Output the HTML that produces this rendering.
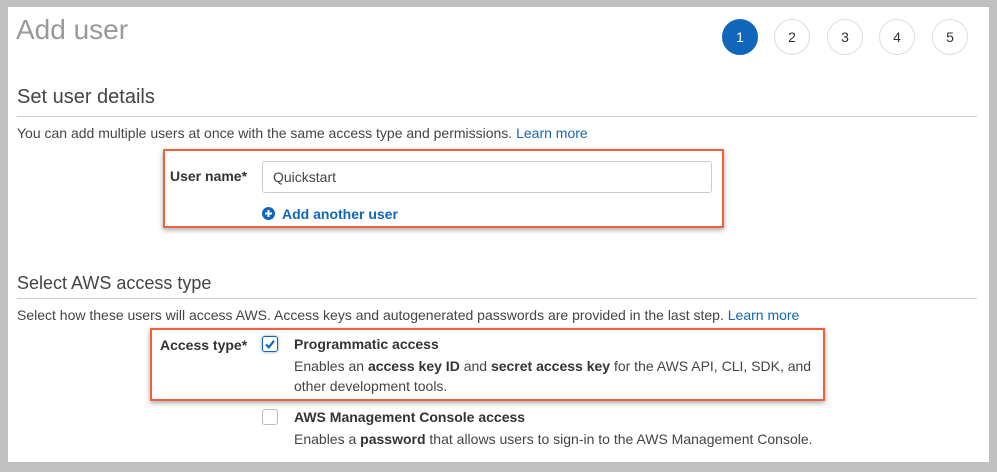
<!DOCTYPE html>
<html><head><style>
*{margin:0;padding:0;box-sizing:border-box}
body{width:997px;height:472px;background:#c0c0c0;font-family:"Liberation Sans",Arial,sans-serif;position:relative;overflow:hidden;color:#444}
#p{position:absolute;left:8px;top:7px;width:981px;height:455px;background:#fff}
.a{position:absolute;white-space:nowrap}
h1{position:absolute;left:16px;top:14px;font-size:28px;font-weight:normal;color:#999}
.h2{font-size:20px;color:#444}
.hr{position:absolute;height:1px;background:#ccc;left:17px;width:960px}
.t{font-size:14px;color:#444}
.lk{color:#1166bb}
.c{position:absolute;top:19px;width:36px;height:36px;border-radius:50%;border:1px solid #ddd;text-align:center;line-height:34px;font-size:14px;color:#333}
.box{position:absolute;border:2px solid #f0603a;box-shadow:0 2px 5px rgba(0,0,0,.35)}
.cb{position:absolute;width:16px;height:16px;border:1px solid #bbb;border-radius:3px;background:#fff}
b{color:#333}
</style></head><body>
<div id="p"></div>
<h1>Add user</h1>
<div class="c" style="left:722px;background:#1166bb;border-color:#1166bb;color:#fff">1</div>
<div class="c" style="left:774px">2</div>
<div class="c" style="left:827px">3</div>
<div class="c" style="left:879px">4</div>
<div class="c" style="left:932px">5</div>
<div class="a h2" style="left:17px;top:86px">Set user details</div>
<div class="hr" style="top:116px"></div>
<div class="a t" style="left:17px;top:125px">You can add multiple users at once with the same access type and permissions. <span class="lk">Learn more</span></div>
<div class="box" style="left:163px;top:149px;width:561px;height:79px"></div>
<div class="a t" style="left:170px;top:168px;font-weight:bold;color:#333">User name*</div>
<div class="a" style="left:262px;top:161px;width:450px;height:32px;border:1px solid #ccc;border-radius:3px;font-size:14px;line-height:30px;padding-left:10px;color:#444">Quickstart</div>
<svg class="a" style="left:262px;top:207px" width="13" height="13" viewBox="0 0 13 13"><circle cx="6.5" cy="6.5" r="6.5" fill="#1166bb"/><path d="M6.5 3v7M3 6.5h7" stroke="#fff" stroke-width="2"/></svg>
<div class="a t lk" style="left:282px;top:206px;font-weight:bold">Add another user</div>
<div class="a h2" style="left:17px;top:273px;font-size:18px">Select AWS access type</div>
<div class="hr" style="top:298px"></div>
<div class="a t" style="left:17px;top:307px">Select how these users will access AWS. Access keys and autogenerated passwords are provided in the last step. <span class="lk">Learn more</span></div>
<div class="box" style="left:150px;top:328px;width:675px;height:73px"></div>
<div class="a t" style="left:160px;top:337px;font-weight:bold;color:#333">Access type*</div>
<div class="cb" style="left:262px;top:336px;border-color:#1166bb;box-shadow:0 0 3px #7ab"><svg width="14" height="14" viewBox="0 0 14 14" style="position:absolute;left:0;top:0"><path d="M3 7.5l2.8 2.8L11 3.8" stroke="#1166bb" stroke-width="2.2" fill="none"/></svg></div>
<div class="a t" style="left:294px;top:336px;font-weight:bold;color:#333">Programmatic access</div>
<div class="a t" style="left:294px;top:358px">Enables an <b>access key ID</b> and <b>secret access key</b> for the AWS API, CLI, SDK, and</div>
<div class="a t" style="left:294px;top:378px">other development tools.</div>
<div class="cb" style="left:262px;top:409px"></div>
<div class="a t" style="left:294px;top:409px;font-weight:bold;color:#333">AWS Management Console access</div>
<div class="a t" style="left:294px;top:431px">Enables a <b>password</b> that allows users to sign-in to the AWS Management Console.</div>
</body></html>
